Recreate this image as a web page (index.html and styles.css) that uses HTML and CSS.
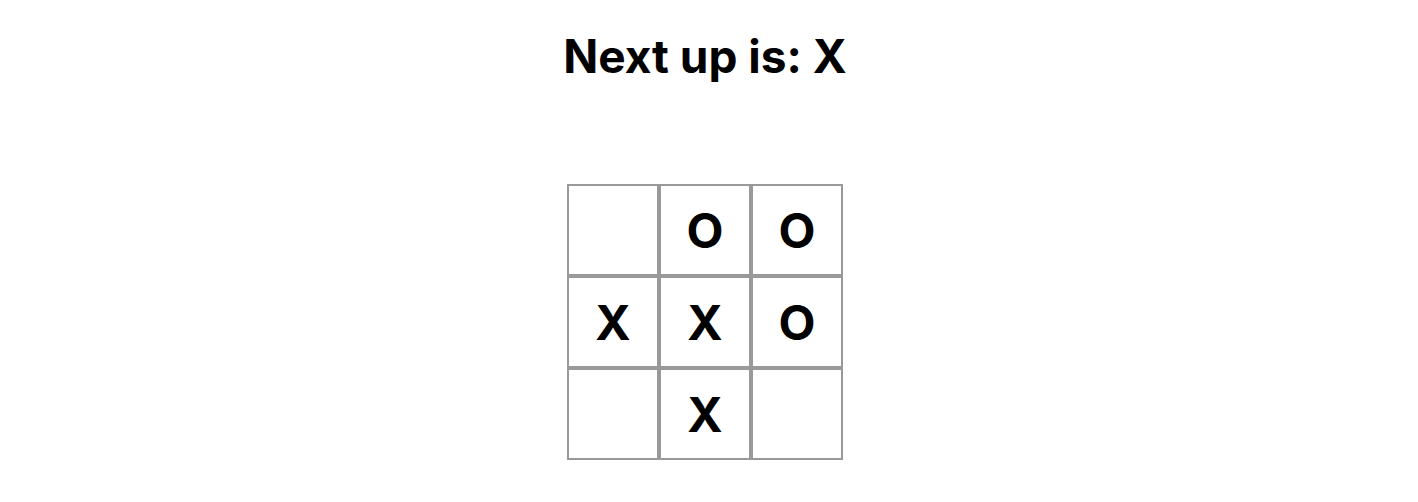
FILE: index.html
```html
<!DOCTYPE html>
<html lang="en">
<head>
<meta charset="utf-8">
<title>Tic Tac Toe</title>
<link rel="stylesheet" href="styles.css">
</head>
<body>
<main class="game">
<h1 class="status">Next up is: X</h1>
<div class="board">
<button class="square" type="button" aria-label="Empty"></button>
<button class="square" type="button">O</button>
<button class="square" type="button">O</button>
<button class="square" type="button">X</button>
<button class="square" type="button">X</button>
<button class="square" type="button">O</button>
<button class="square" type="button" aria-label="Empty"></button>
<button class="square" type="button">X</button>
<button class="square" type="button" aria-label="Empty"></button>
</div>
</main>
</body>
</html>
```
FILE: styles.css
```css
body {
  margin: 0;
  background: #fff;
  color: #000;
  font-family: Inter, sans-serif;
}
.game {
  display: flex;
  flex-direction: column;
  align-items: center;
  padding: 28px 8px 40px 0;
}
.status {
  margin: 0 0 100px;
  font-size: 46px;
  line-height: 56px;
  font-weight: 700;
}
.board {
  display: grid;
  grid-template-columns: repeat(3, 92px);
  grid-auto-rows: 92px;
}
.square {
  margin: 0;
  padding: 0;
  border: 2px solid #999;
  border-radius: 0;
  background: #fff;
  color: #000;
  font-family: inherit;
  font-size: 48px;
  font-weight: 700;
}
```
